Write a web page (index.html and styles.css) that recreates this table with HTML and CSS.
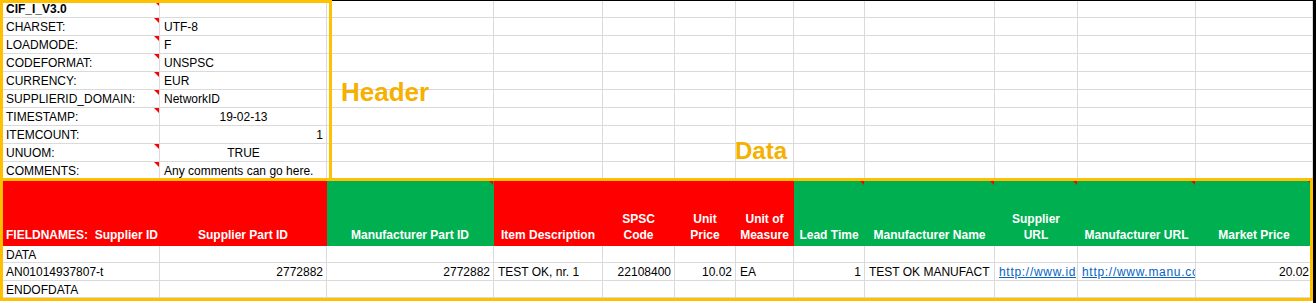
FILE: index.html
```html
<!DOCTYPE html>
<html lang="en">
<head>
<meta charset="utf-8">
<title>CIF catalog template</title>
<link rel="stylesheet" href="styles.css">
</head>
<body>
<div class="sheet">
  <div class="grid">
    <!-- row 1 -->
    <div class="c first b cm top">CIF_I_V3.0</div><div class="c top"></div>
    <div class="c"></div><div class="c"></div><div class="c"></div><div class="c"></div><div class="c"></div><div class="c"></div><div class="c"></div><div class="c"></div><div class="c"></div><div class="c"></div>
    <!-- row 2 -->
    <div class="c first cm">CHARSET:</div><div class="c">UTF-8</div>
    <div class="c"></div><div class="c"></div><div class="c"></div><div class="c"></div><div class="c"></div><div class="c"></div><div class="c"></div><div class="c"></div><div class="c"></div><div class="c"></div>
    <!-- row 3 -->
    <div class="c first cm">LOADMODE:</div><div class="c">F</div>
    <div class="c"></div><div class="c"></div><div class="c"></div><div class="c"></div><div class="c"></div><div class="c"></div><div class="c"></div><div class="c"></div><div class="c"></div><div class="c"></div>
    <!-- row 4 -->
    <div class="c first cm">CODEFORMAT:</div><div class="c">UNSPSC</div>
    <div class="c"></div><div class="c"></div><div class="c"></div><div class="c"></div><div class="c"></div><div class="c"></div><div class="c"></div><div class="c"></div><div class="c"></div><div class="c"></div>
    <!-- row 5 -->
    <div class="c first cm">CURRENCY:</div><div class="c">EUR</div>
    <div class="c"></div><div class="c"></div><div class="c"></div><div class="c"></div><div class="c"></div><div class="c"></div><div class="c"></div><div class="c"></div><div class="c"></div><div class="c"></div>
    <!-- row 6 -->
    <div class="c first cm">SUPPLIERID_DOMAIN:</div><div class="c">NetworkID</div>
    <div class="c"></div><div class="c"></div><div class="c"></div><div class="c"></div><div class="c"></div><div class="c"></div><div class="c"></div><div class="c"></div><div class="c"></div><div class="c"></div>
    <!-- row 7 -->
    <div class="c first cm">TIMESTAMP:</div><div class="c ctr">19-02-13</div>
    <div class="c"></div><div class="c"></div><div class="c"></div><div class="c"></div><div class="c"></div><div class="c"></div><div class="c"></div><div class="c"></div><div class="c"></div><div class="c"></div>
    <!-- row 8 -->
    <div class="c first">ITEMCOUNT:</div><div class="c r">1</div>
    <div class="c"></div><div class="c"></div><div class="c"></div><div class="c"></div><div class="c"></div><div class="c"></div><div class="c"></div><div class="c"></div><div class="c"></div><div class="c"></div>
    <!-- row 9 -->
    <div class="c first cm">UNUOM:</div><div class="c ctr">TRUE</div>
    <div class="c"></div><div class="c"></div><div class="c"></div><div class="c"></div><div class="c"></div><div class="c"></div><div class="c"></div><div class="c"></div><div class="c"></div><div class="c"></div>
    <!-- row 10 -->
    <div class="c first cm">COMMENTS:</div><div class="c">Any comments can go here.</div>
    <div class="c"></div><div class="c"></div><div class="c"></div><div class="c"></div><div class="c"></div><div class="c"></div><div class="c"></div><div class="c"></div><div class="c"></div><div class="c"></div>

    <!-- field names -->
    <div class="c hd red hd-first">FIELDNAMES:&nbsp; Supplier ID</div>
    <div class="c hd red">Supplier Part ID</div>
    <div class="c hd green cm">Manufacturer Part ID</div>
    <div class="c hd red">Item Description</div>
    <div class="c hd red">SPSC<br>Code</div>
    <div class="c hd red">Unit<br>Price</div>
    <div class="c hd red">Unit of<br>Measure</div>
    <div class="c hd green cm">Lead Time</div>
    <div class="c hd green cm">Manufacturer Name</div>
    <div class="c hd green cm">Supplier<br>URL</div>
    <div class="c hd green cm">Manufacturer URL</div>
    <div class="c hd green cm">Market Price</div>

    <!-- DATA -->
    <div class="c first">DATA</div>
    <div class="c"></div><div class="c"></div><div class="c"></div><div class="c"></div><div class="c"></div><div class="c"></div><div class="c"></div><div class="c"></div><div class="c"></div><div class="c"></div><div class="c"></div>

    <!-- item -->
    <div class="c first">AN01014937807-t</div>
    <div class="c r">2772882</div>
    <div class="c r">2772882</div>
    <div class="c">TEST OK, nr. 1</div>
    <div class="c r">22108400</div>
    <div class="c r">10.02</div>
    <div class="c">EA</div>
    <div class="c r">1</div>
    <div class="c">TEST OK MANUFACT</div>
    <div class="c"><span class="lnk">http://www.idp.com</span></div>
    <div class="c"><span class="lnk">http://www.manu.com</span></div>
    <div class="c r">20.02</div>

    <!-- ENDOFDATA -->
    <div class="c first">ENDOFDATA</div>
    <div class="c"></div><div class="c"></div><div class="c"></div><div class="c"></div><div class="c"></div><div class="c"></div><div class="c"></div><div class="c"></div><div class="c"></div><div class="c"></div><div class="c"></div>
  </div>

  <div class="box box-header"></div>
  <div class="box box-data"></div>
  <div class="label label-header">Header</div>
  <div class="label label-data">Data</div>
</div>
</body>
</html>
```

FILE: styles.css
```css
html, body {
  margin: 0;
  padding: 0;
  background: #ffffff;
}

body {
  font-family: "Liberation Sans", Arial, sans-serif;
  font-size: 12px;
  color: #000000;
}

.sheet {
  position: relative;
  width: 1313px;
  height: 303px;
  border-right: 3px solid #000000;
  overflow: hidden;
}

.grid {
  display: grid;
  grid-template-columns: 160px 167px 167px 109px 72px 61px 58px 71px 130px 83px 118px 117px;
  grid-template-rows: 17px repeat(9, 18px) 66px 17px 18px 17px;
  border-top: 1px solid #000000;
}

.c {
  position: relative;
  box-sizing: border-box;
  border-right: 1px solid #dadada;
  border-bottom: 1px solid #dadada;
  padding: 2px 3px 0 4px;
  line-height: 15px;
  white-space: nowrap;
  overflow: hidden;
}

.c.top {
  padding-top: 1px;
}

.first {
  padding-left: 6px;
}

.b {
  font-weight: bold;
}

.r {
  text-align: right;
}

.ctr {
  text-align: center;
}

.cm::after {
  content: "";
  position: absolute;
  top: 0;
  right: 0;
  border-top: 5px solid #ff0000;
  border-left: 5px solid transparent;
}

.hd {
  display: flex;
  flex-direction: column;
  justify-content: flex-end;
  align-items: center;
  text-align: center;
  color: #ffffff;
  font-weight: bold;
  line-height: 16px;
  padding: 0 2px 2px;
  border-right-color: transparent;
  border-bottom-color: transparent;
}

.hd-first {
  align-items: flex-start;
  text-align: left;
  padding-left: 6px;
}

.red {
  background: #ff0000;
}

.green {
  background: #00b050;
}

.lnk {
  color: #0563c1;
  text-decoration: underline;
  letter-spacing: 0.7px;
}

.box {
  position: absolute;
  box-sizing: border-box;
  border: 3px solid #ffc000;
  pointer-events: none;
}

.box-header {
  left: 0;
  top: 0;
  width: 332px;
  height: 181px;
}

.box-data {
  left: 0;
  top: 178px;
  width: 1313px;
  height: 123px;
}

.label {
  position: absolute;
  font-weight: bold;
  color: #f5b000;
  line-height: 1;
  white-space: nowrap;
}

.label-header {
  left: 341px;
  top: 79px;
  font-size: 26px;
}

.label-data {
  left: 735px;
  top: 139px;
  font-size: 24px;
}
```
